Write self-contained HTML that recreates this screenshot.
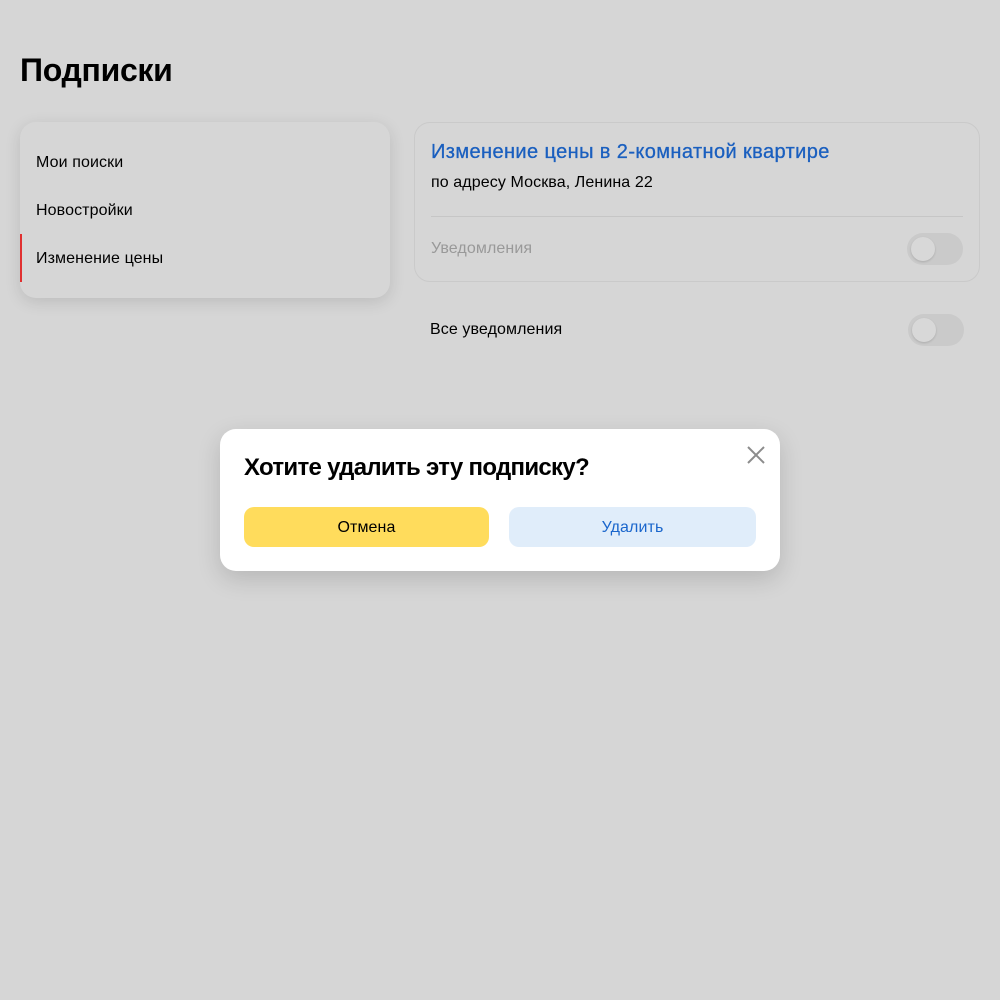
<!DOCTYPE html>
<html><head><meta charset="utf-8"><style>
*{margin:0;padding:0;box-sizing:border-box}
body{width:1000px;height:1000px;background:#d6d6d6;font-family:"Liberation Sans",sans-serif;position:relative;overflow:hidden;color:#000}
.a{position:absolute;white-space:nowrap}
.t{font-size:16px;letter-spacing:0.1px}
.sw{position:absolute;width:56px;height:32px;border-radius:16px;background:#cacaca}
.sw::after{content:"";position:absolute;left:4px;top:4px;width:24px;height:24px;border-radius:50%;background:#d8d8d8;box-shadow:0 1px 2px rgba(0,0,0,.15)}
</style></head><body>
<div class="a" style="left:20px;top:52px;font-size:32px;font-weight:bold;letter-spacing:-0.3px">Подписки</div>
<div class="a" style="left:20px;top:122px;width:370px;height:176px;border-radius:16px;background:#d6d6d6;box-shadow:0 4px 16px rgba(0,0,0,.12)">
  <div class="a t" style="left:16px;top:32px">Мои поиски</div>
  <div class="a t" style="left:16px;top:80px">Новостройки</div>
  <div class="a" style="left:0;top:112px;width:2px;height:48px;background:#e03030"></div>
  <div class="a t" style="left:16px;top:128px">Изменение цены</div>
</div>
<div class="a" style="left:414px;top:122px;width:566px;height:160px;border:1px solid #cacaca;border-radius:16px"></div>
<div class="a" style="left:431px;top:141px;font-size:20px;color:#1a5fbf;letter-spacing:0.4px;-webkit-text-stroke:0.3px #1a5fbf">Изменение цены в 2-комнатной квартире</div>
<div class="a t" style="left:431px;top:174px">по адресу Москва, Ленина 22</div>
<div class="a" style="left:431px;top:216px;width:532px;height:1px;background:#c6c6c6"></div>
<div class="a t" style="left:431px;top:240px;color:#999">Уведомления</div>
<div class="sw" style="left:907px;top:233px"></div>
<div class="a t" style="left:430px;top:321px">Все уведомления</div>
<div class="sw" style="left:908px;top:314px"></div>
<div class="a" style="left:220px;top:429px;width:560px;height:142px;background:#fff;border-radius:16px;box-shadow:0 8px 24px rgba(0,0,0,.15)">
  <div class="a" style="left:24px;top:25px;font-size:24px;font-weight:bold;letter-spacing:-0.7px">Хотите удалить эту подписку?</div>
  <svg class="a" style="left:526px;top:16px" width="20" height="20" viewBox="0 0 20 20"><path d="M2 2L18 18M18 2L2 18" stroke="#8c8c8c" stroke-width="2"/></svg>
  <div class="a t" style="left:24px;top:78px;width:245px;height:40px;border-radius:10px;background:#ffdc5c;text-align:center;line-height:42px">Отмена</div>
  <div class="a t" style="left:289px;top:78px;width:247px;height:40px;border-radius:10px;background:#e0edfa;color:#1a66cc;text-align:center;line-height:42px">Удалить</div>
</div>
</body></html>
